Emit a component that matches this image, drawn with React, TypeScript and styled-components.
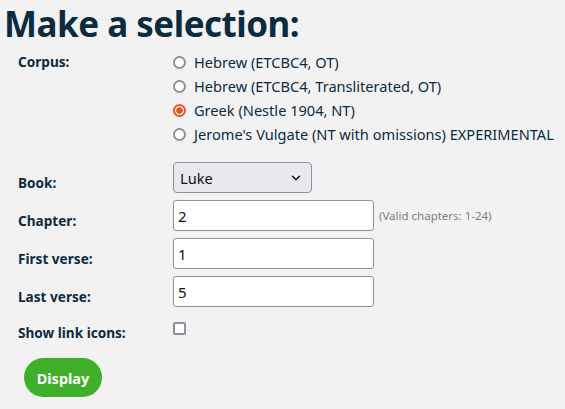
import React from "react";
import styled, { createGlobalStyle } from "styled-components";
import { ChevronDown } from "lucide-react";

const Global = createGlobalStyle`
  html, body { margin: 0; padding: 0; background: #f2f2f2; }
  body { font-family: "Noto Sans", "Open Sans", sans-serif; color: #0d2b3e; }
`;

const Page = styled.div`
  padding: 0 0 12px 0;
`;

const Heading = styled.h1`
  margin: 0;
  padding: 0 0 0 4px;
  font-size: 35px;
  line-height: 48px;
  font-weight: 700;
  letter-spacing: -0.5px;
  color: #0d2b3e;
`;

const Form = styled.form`
  display: grid;
  grid-template-columns: 155px auto;
  row-gap: 7px;
  padding: 2px 0 0 18px;
  align-items: start;
`;

const Label = styled.div<{ $pt: number }>`
  font-size: 13.6px;
  font-weight: 700;
  color: #0d2b3e;
  padding-top: ${(p) => p.$pt}px;
  line-height: 18px;
`;

const RadioList = styled.div`
  display: flex;
  flex-direction: column;
  margin-bottom: 9px;
`;

const RadioRow = styled.label`
  display: flex;
  align-items: center;
  height: 24px;
  gap: 8px;
  font-size: 14.6px;
  color: #0d2b3e;
  cursor: pointer;
`;

const Radio = styled.input.attrs({ type: "radio" })`
  appearance: none;
  margin: 0;
  width: 13px;
  height: 13px;
  border-radius: 50%;
  border: 2px solid #8f8f9d;
  background: #fff;
  box-sizing: border-box;
  flex: none;
  &:checked {
    border-color: #e9541f;
    background: radial-gradient(circle, #e9541f 0 3px, #fff 3.5px);
  }
`;

const SelectWrap = styled.div`
  position: relative;
  width: 139px;
`;

const Select = styled.select`
  appearance: none;
  width: 139px;
  height: 31px;
  box-sizing: border-box;
  border: 1px solid #8f8f9d;
  border-radius: 4px;
  background: #e9e9ed;
  font-family: inherit;
  font-size: 14.6px;
  color: #111;
  padding: 0 6px;
`;

const Chevron = styled(ChevronDown)`
  position: absolute;
  right: 9px;
  top: 9px;
  pointer-events: none;
  color: #111;
`;

const FieldRow = styled.div`
  display: flex;
  align-items: center;
  gap: 5px;
`;

const TextInput = styled.input.attrs({ type: "text" })`
  width: 201px;
  height: 31px;
  box-sizing: border-box;
  border: 1px solid #8f8f9d;
  border-radius: 3px;
  background: #fff;
  font-family: inherit;
  font-size: 15px;
  color: #111;
  padding: 0 4px;
  margin: 0;
`;

const Hint = styled.span`
  font-size: 11.5px;
  color: #7d7d7d;
`;

const Checkbox = styled.input.attrs({ type: "checkbox" })`
  appearance: none;
  margin: 8px 0 0 0;
  width: 13px;
  height: 13px;
  box-sizing: border-box;
  border: 2px solid #8f8f9d;
  border-radius: 2px;
  background: #fff;
`;

const ButtonRow = styled.div`
  grid-column: 1 / -1;
  padding: 9px 0 0 6px;
`;

const Button = styled.button`
  width: 78px;
  height: 39px;
  border: none;
  border-radius: 20px;
  background: #3fae2a;
  color: #fff;
  font-family: inherit;
  font-weight: 700;
  font-size: 14.5px;
  cursor: pointer;
`;

const corpora = [
  "Hebrew (ETCBC4, OT)",
  "Hebrew (ETCBC4, Transliterated, OT)",
  "Greek (Nestle 1904, NT)",
  "Jerome's Vulgate (NT with omissions) EXPERIMENTAL",
];

export default function App() {
  return (
    <Page>
      <Global />
      <Heading>Make a selection:</Heading>
      <Form onSubmit={(e) => e.preventDefault()}>
        <Label $pt={3}>Corpus:</Label>
        <RadioList>
          {corpora.map((c, i) => (
            <RadioRow key={c}>
              <Radio name="corpus" defaultChecked={i === 2} />
              {c}
            </RadioRow>
          ))}
        </RadioList>

        <Label $pt={12}>Book:</Label>
        <SelectWrap>
          <Select defaultValue="Luke">
            <option>Matthew</option>
            <option>Mark</option>
            <option>Luke</option>
            <option>John</option>
          </Select>
          <Chevron size={14} strokeWidth={2.5} />
        </SelectWrap>

        <Label $pt={12}>Chapter:</Label>
        <FieldRow>
          <TextInput defaultValue="2" />
          <Hint>(Valid chapters: 1-24)</Hint>
        </FieldRow>

        <Label $pt={12}>First verse:</Label>
        <TextInput defaultValue="1" />

        <Label $pt={12}>Last verse:</Label>
        <TextInput defaultValue="5" />

        <Label $pt={10}>Show link icons:</Label>
        <div>
          <Checkbox />
        </div>

        <ButtonRow>
          <Button type="submit">Display</Button>
        </ButtonRow>
      </Form>
    </Page>
  );
}
